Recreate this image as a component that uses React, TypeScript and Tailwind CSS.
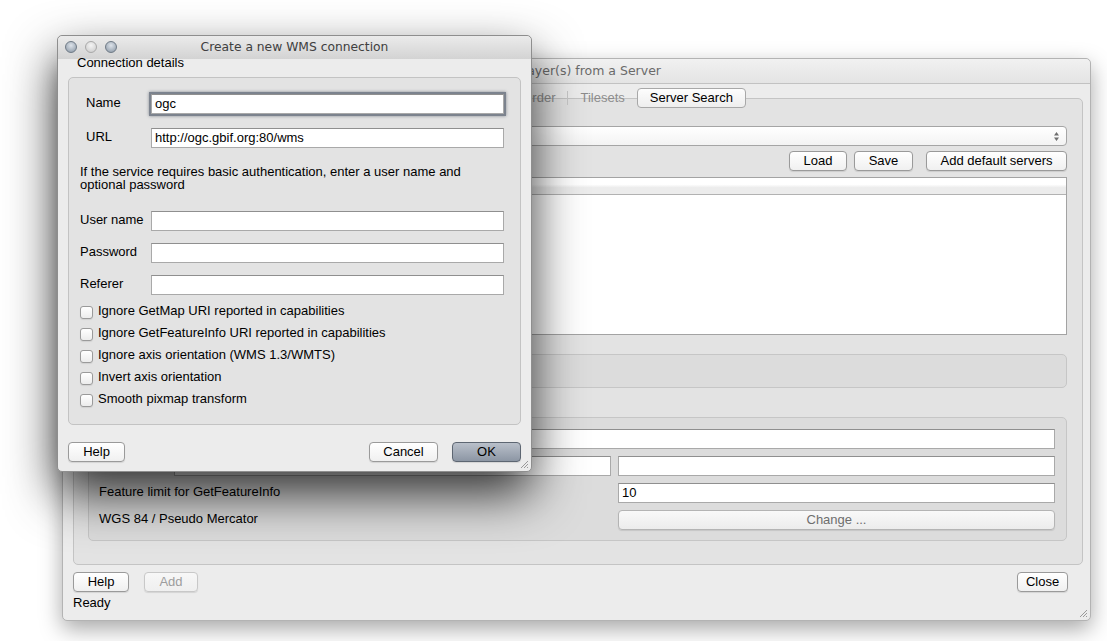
import React from "react";

const sans = "font-['Liberation_Sans',Arial,sans-serif]";

function Button({
  children,
  className = "",
  disabled = false,
  primary = false,
  muted = false,
}: {
  children?: React.ReactNode;
  className?: string;
  disabled?: boolean;
  primary?: boolean;
  muted?: boolean;
}) {
  const look = primary
    ? "border-[#5d6672] bg-[linear-gradient(#b9c0ca,#8c96a4)] text-black"
    : disabled
    ? "border-[#c8c8c8] bg-[linear-gradient(#f7f7f7,#efefef)] text-[#9d9d9d]"
    : muted
    ? "border-[#b4b4b4] bg-[linear-gradient(#f9f9f9,#ececec)] text-[#6e6e6e]"
    : "border-[#9a9a9a] bg-[linear-gradient(#ffffff,#f0f0f0)] text-black";
  return (
    <div
      className={`h-[20px] rounded-[4px] border ${look} shadow-[0_1px_1px_rgba(0,0,0,0.1)] flex items-center justify-center pb-[2px] text-[13px] leading-none ${className}`}
    >
      {children}
    </div>
  );
}

function Field({ value = "", className = "", focused = false }: { value?: string; className?: string; focused?: boolean }) {
  return (
    <div
      className={`h-[20px] bg-white border border-[#a9a9a9] border-t-[#8f8f8f] flex items-center px-[3px] pb-[1px] text-[13px] text-black ${
        focused ? "shadow-[0_0_0_2px_#7c838e,0_0_3px_2px_rgba(70,80,95,0.6)]" : ""
      } ${className}`}
    >
      {value}
    </div>
  );
}

function Checkbox({ label }: { label: string }) {
  return (
    <div className="h-[22px] flex items-center">
      <div className="w-[13px] h-[13px] rounded-[3px] border border-[#9a9a9a] bg-[linear-gradient(#ffffff,#ececec)] shadow-[0_1px_1px_rgba(0,0,0,0.08)]" />
      <span className="ml-[5px] text-[13px] -mt-[2px]">{label}</span>
    </div>
  );
}

function Grip() {
  return (
    <svg width="9" height="9" viewBox="0 0 9 9" className="absolute right-[2px] bottom-[2px]">
      <path d="M8 1 L1 8 M8 4 L4 8 M8 7 L7 8" stroke="#9a9a9a" strokeWidth="1" />
    </svg>
  );
}

function Light({ dim = false }: { dim?: boolean }) {
  return (
    <div
      className={`w-[12px] h-[12px] rounded-full border ${
        dim
          ? "border-[#a9a9a9] bg-[radial-gradient(circle_at_50%_35%,#f4f4f4,#c9c9c9)]"
          : "border-[#6f7a86] bg-[radial-gradient(circle_at_50%_35%,#dde3ea,#8895a3)]"
      }`}
    />
  );
}

// Back window: most of its left half sits under the dialog, so only the
// parts that show carry labels.
function ServerWindow() {
  return (
    <div className="absolute z-0 left-[62px] top-[58px] w-[1029px] h-[563px] rounded-[5px] bg-[#ececec] border border-[#b3b3b3] shadow-[0_8px_22px_rgba(0,0,0,0.35)] flex flex-col">
      <div className="h-[25px] shrink-0 rounded-t-[5px] border-b border-[#c2c2c2] bg-[linear-gradient(#f1f1f1,#e4e4e4)] flex items-center justify-center">
        <span className="font-['DejaVu_Sans',sans-serif] text-[12.5px] text-[#6a6a6a]">Add Layer(s) from a Server</span>
      </div>

      <div className="px-[10px] pr-[7px] flex flex-col">
        <div className="relative z-10 mt-[4px] h-[20px] flex justify-center">
          <div className="flex items-center text-[13px] text-[#8c8c8c]">
            <div className="w-[63px]" />
            <div className="w-px h-[14px] bg-[#c8c8c8]" />
            <div className="px-[12px] pb-[1px]">Layer Order</div>
            <div className="w-px h-[14px] bg-[#c8c8c8]" />
            <div className="px-[12px] pb-[1px]">Tilesets</div>
            <div className="h-[20px] px-[12px] pb-[1px] flex items-center rounded-[4px] border border-[#a8a8a8] bg-[linear-gradient(#fdfdfd,#eeeeee)] text-black">
              Server Search
            </div>
          </div>
        </div>

        <div className="-mt-[10px] h-[467px] rounded-[5px] border border-[#c4c4c4] bg-[#e3e3e3] pt-[27px] pl-[14px] pr-[15px] flex flex-col">
          <div className="h-[20px] rounded-[4px] border border-[#a5a5a5] bg-[linear-gradient(#ffffff,#f3f3f3)] flex items-center justify-end pr-[6px]">
            <svg width="7" height="11" viewBox="0 0 7 11">
              <path d="M3.5 1 L6 4.5 H1 Z M3.5 10 L6 6.5 H1 Z" fill="#6f6f6f" />
            </svg>
          </div>

          <div className="mt-[5px] flex">
            <div className="flex-1" />
            <Button className="w-[58px]">Load</Button>
            <Button className="w-[59px] ml-[7px]">Save</Button>
            <Button className="w-[141px] ml-[13px]">Add default servers</Button>
          </div>

          <div className="mt-[6px] h-[158px] border border-[#a3a3a3] bg-white flex flex-col">
            <div className="h-[17px] border-b border-[#b2b2b2] bg-[linear-gradient(#ffffff_40%,#ececec_60%)]" />
          </div>

          <div className="mt-[19px] h-[34px] rounded-[5px] border border-[#c6c6c6] bg-[#dcdcdc]" />

          <div className="mt-[29px] h-[124px] rounded-[5px] border border-[#c6c6c6] bg-[#dcdcdc] pt-[11px] pl-[10px] pr-[11px]">
            <div className="grid grid-cols-[68px_1fr_1fr] gap-x-[7px] gap-y-[7px] text-[13px]">
              <div className="h-[20px]" />
              <Field className="col-span-2" />
              <div className="h-[20px]" />
              <Field />
              <Field />
              <div className="col-span-2 h-[20px] flex items-center pb-[2px]">Feature limit for GetFeatureInfo</div>
              <Field value="10" />
              <div className="col-span-2 h-[20px] flex items-center pb-[2px]">WGS 84 / Pseudo Mercator</div>
              <Button muted>Change ...</Button>
            </div>
          </div>
        </div>

        <div className="mt-[7px] flex">
          <Button className="w-[56px]">Help</Button>
          <Button disabled className="w-[54px] ml-[15px]">Add</Button>
          <div className="flex-1" />
          <Button className="w-[51px] mr-[15px]">Close</Button>
        </div>
        <div className="mt-[4px] h-[14px] text-[13px] leading-[14px]">Ready</div>
      </div>
      <Grip />
    </div>
  );
}

function WmsDialog() {
  return (
    <div className="absolute z-20 left-[57px] top-[35px] w-[475px] h-[437px] rounded-[5px] bg-[#ececec] border border-[#8e8e8e] shadow-[0_22px_50px_rgba(0,0,0,0.78)] flex flex-col">
      <div className="relative h-[23px] shrink-0 rounded-t-[5px] bg-[linear-gradient(#ebebeb,#d3d3d3)] flex items-center justify-center">
        <div className="absolute left-[7px] top-[5px] flex gap-[8px]">
          <Light />
          <Light dim />
          <Light />
        </div>
        <span className="font-['DejaVu_Sans',sans-serif] text-[12.3px] text-[#404040]">Create a new WMS connection</span>
      </div>

      <div className="relative -mt-[4px] h-[15px] pl-[19px] text-[13px] leading-[15px]">Connection details</div>

      <div className="mt-[7px] mx-[10px] h-[348px] rounded-[5px] border border-[#c3c3c3] bg-[#e3e3e3] pt-[16px] pl-[11px] pr-[16px] flex flex-col text-[13px]">
        <div className="flex items-center pl-[6px]">
          <div className="w-[65px] -mt-[2px]">Name</div>
          <Field value="ogc" focused className="flex-1" />
        </div>
        <div className="mt-[14px] flex items-center pl-[6px]">
          <div className="w-[65px] -mt-[2px]">URL</div>
          <Field value="http://ogc.gbif.org:80/wms" className="flex-1" />
        </div>

        <p className="mt-[17px] leading-[13px] pr-[4px]">
          If the service requires basic authentication, enter a user name and optional password
        </p>

        <div className="mt-[20px] flex items-center">
          <div className="w-[71px] -mt-[2px]">User name</div>
          <Field className="flex-1" />
        </div>
        <div className="mt-[12px] flex items-center">
          <div className="w-[71px] -mt-[2px]">Password</div>
          <Field className="flex-1" />
        </div>
        <div className="mt-[12px] flex items-center">
          <div className="w-[71px] -mt-[2px]">Referer</div>
          <Field className="flex-1" />
        </div>

        <div className="mt-[6px] flex flex-col">
          <Checkbox label="Ignore GetMap URI reported in capabilities" />
          <Checkbox label="Ignore GetFeatureInfo URI reported in capabilities" />
          <Checkbox label="Ignore axis orientation (WMS 1.3/WMTS)" />
          <Checkbox label="Invert axis orientation" />
          <Checkbox label="Smooth pixmap transform" />
        </div>
      </div>

      <div className="mt-[17px] px-[10px] flex">
        <Button className="w-[57px]">Help</Button>
        <div className="flex-1" />
        <Button className="w-[69px]">Cancel</Button>
        <Button primary className="w-[69px] ml-[14px]">OK</Button>
      </div>
      <Grip />
    </div>
  );
}

export default function App() {
  return (
    <div className={`relative w-[1107px] h-[641px] overflow-hidden bg-white text-black ${sans}`}>
      <ServerWindow />
      <WmsDialog />
    </div>
  );
}
